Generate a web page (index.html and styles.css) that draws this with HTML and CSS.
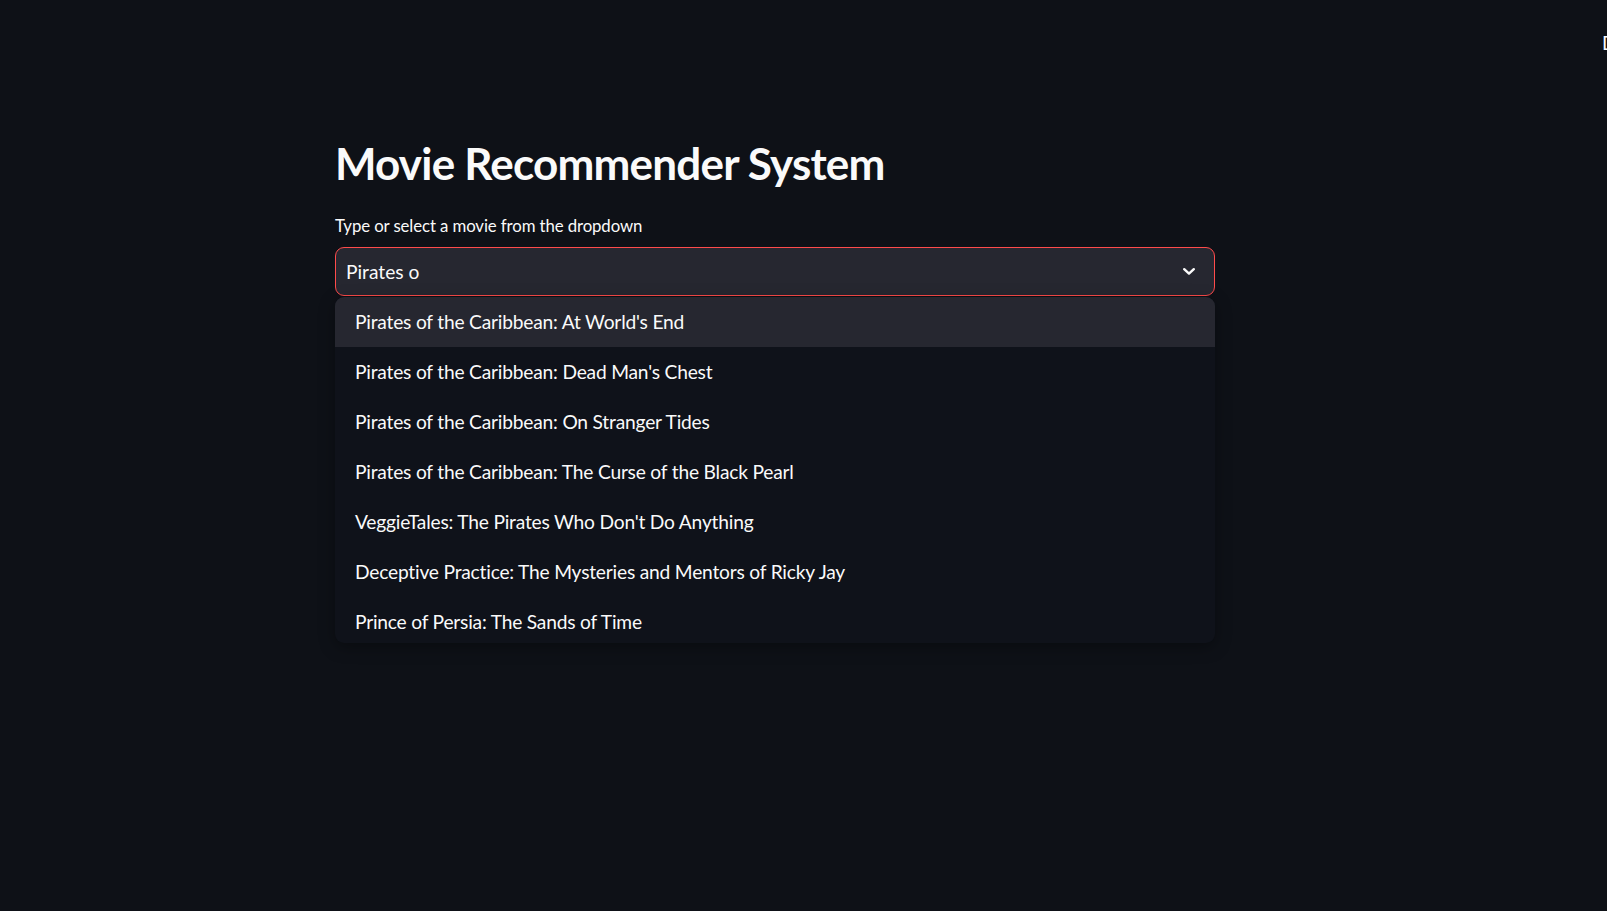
FILE: index.html
```html
<!DOCTYPE html>
<html lang="en">
<head>
<meta charset="utf-8">
<title>Movie Recommender System</title>
<link rel="stylesheet" href="styles.css">
</head>
<body>
<header class="toolbar"><span class="deploy">D</span></header>
<main class="main">
  <h1 class="title">Movie Recommender System</h1>
  <label class="label">Type or select a movie from the dropdown</label>
  <div class="select">
    <span class="select-value">Pirates o</span>
    <svg class="chevron" width="12" height="7" viewBox="0 0 12 7" aria-hidden="true">
      <path d="M1.2 1.2 L6 5.6 L10.8 1.2" fill="none" stroke="#fafafa" stroke-width="2.4" stroke-linecap="round" stroke-linejoin="round"/>
    </svg>
  </div>
  <ul class="menu">
    <li class="option active">Pirates of the Caribbean: At World's End</li>
    <li class="option">Pirates of the Caribbean: Dead Man's Chest</li>
    <li class="option">Pirates of the Caribbean: On Stranger Tides</li>
    <li class="option">Pirates of the Caribbean: The Curse of the Black Pearl</li>
    <li class="option">VeggieTales: The Pirates Who Don't Do Anything</li>
    <li class="option">Deceptive Practice: The Mysteries and Mentors of Ricky Jay</li>
    <li class="option last">Prince of Persia: The Sands of Time</li>
  </ul>
</main>
</body>
</html>
```

FILE: styles.css
```css
html, body {
  margin: 0;
  padding: 0;
  background: #0e1117;
  color: #fafafa;
  font-family: Lato, "Noto Sans", sans-serif;
  height: 100%;
  overflow: hidden;
}

.toolbar {
  position: absolute;
  top: 33px;
  right: 0;
  width: 5px;
  overflow: hidden;
  white-space: nowrap;
}

.deploy {
  display: block;
  font-size: 19px;
  line-height: 19px;
  color: #fafafa;
}

.main {
  width: 880px;
  padding: 131px 0 0 335px;
  display: flex;
  flex-direction: column;
}

.title {
  margin: 0 0 21px 0;
  font-size: 44px;
  font-weight: 700;
  line-height: 64px;
  letter-spacing: -0.8px;
}

.label {
  display: block;
  font-size: 16.8px;
  line-height: 20px;
  height: 20px;
  margin-bottom: 11px;
  letter-spacing: -0.1px;
}

.select {
  box-sizing: border-box;
  height: 49px;
  border: 1px solid #ff4b4b;
  border-radius: 9px;
  background: #262730;
  display: flex;
  align-items: center;
  justify-content: space-between;
  padding: 0 19px 0 10px;
}

.select-value {
  font-size: 19.2px;
}

.chevron {
  display: block;
}

.menu {
  list-style: none;
  margin: 1px 0 0 0;
  padding: 0;
  height: 346px;
  overflow: hidden;
  border-radius: 9px;
  background: #0f121a;
  box-shadow: 0 4px 16px rgba(0, 0, 0, 0.35);
}

.option {
  box-sizing: border-box;
  height: 50px;
  display: flex;
  align-items: center;
  padding: 0 0 2px 20px;
  font-size: 19.2px;
  letter-spacing: -0.2px;
  color: #fafafa;
}

.option.last {
  height: 48px;
  padding-bottom: 0;
}

.option.active {
  background: #262730;
}
```
